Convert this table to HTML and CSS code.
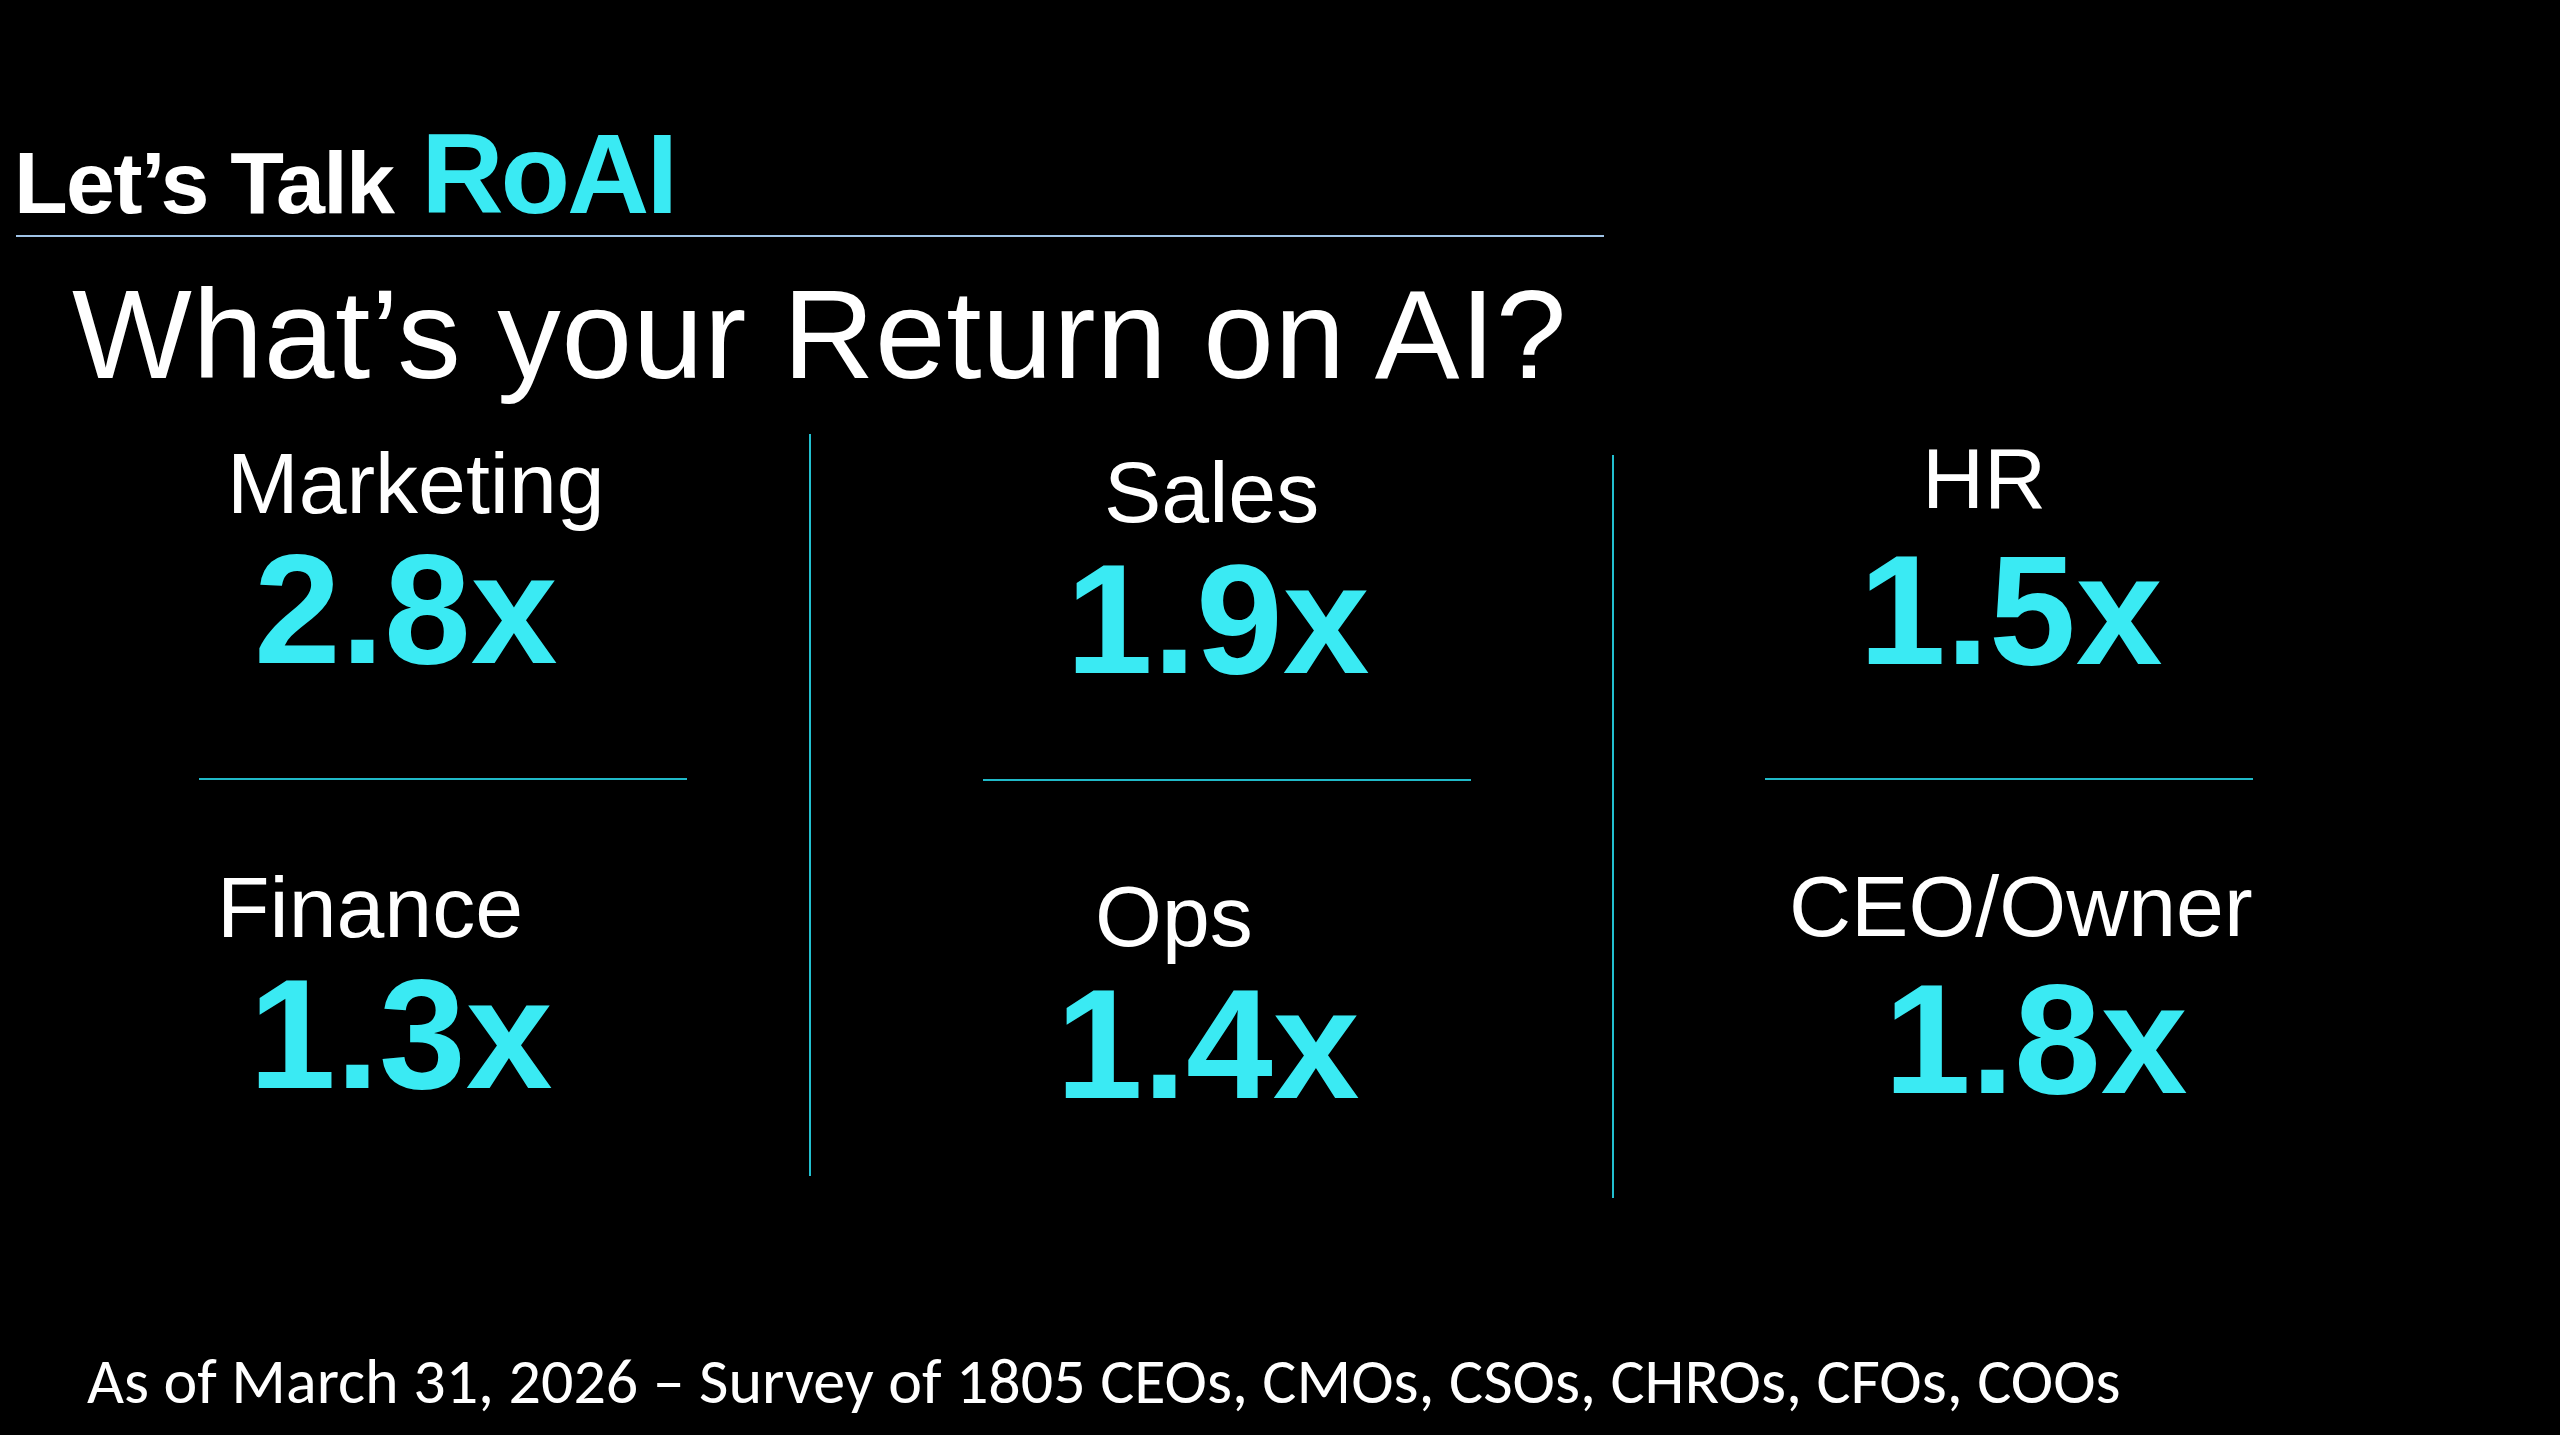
FILE: index.html
```html
<!DOCTYPE html>
<html lang="en">
<head>
<meta charset="utf-8">
<title>Let’s Talk RoAI</title>
<link rel="stylesheet" href="styles.css">
</head>
<body>
<main class="slide">
  <header class="header">
    <span class="header-lead">Let’s Talk</span>
    <span class="header-brand">RoAI</span>
  </header>
  <div class="rule"></div>
  <h1 class="title">What’s your Return on AI?</h1>

  <section class="stats">
    <div class="col col-1">
      <div class="label m-marketing">Marketing</div>
      <div class="value v-marketing">2.8x</div>
      <div class="divider d-1"></div>
      <div class="label m-finance">Finance</div>
      <div class="value v-finance">1.3x</div>
    </div>
    <div class="vline vline-1"></div>
    <div class="col col-2">
      <div class="label m-sales">Sales</div>
      <div class="value v-sales">1.9x</div>
      <div class="divider d-2"></div>
      <div class="label m-ops">Ops</div>
      <div class="value v-ops">1.4x</div>
    </div>
    <div class="vline vline-2"></div>
    <div class="col col-3">
      <div class="label m-hr">HR</div>
      <div class="value v-hr">1.5x</div>
      <div class="divider d-3"></div>
      <div class="label m-ceo">CEO/Owner</div>
      <div class="value v-ceo">1.8x</div>
    </div>
  </section>

  <footer class="footnote">As of March 31, 2026 – Survey of 1805 CEOs, CMOs, CSOs, CHROs, CFOs, COOs</footer>
</main>
</body>
</html>
```

FILE: styles.css
```css
html, body {
  margin: 0;
  padding: 0;
  background: #000;
}

body {
  width: 2560px;
  height: 1435px;
  overflow: hidden;
  font-family: "Liberation Sans", Arial, Helvetica, sans-serif;
  color: #fff;
}

.slide {
  display: flex;
  flex-direction: column;
  padding-top: 117px;
}

/* Header */
.header {
  display: flex;
  align-items: baseline;
  margin-left: 14px;
  font-weight: 700;
  line-height: 1;
}

.header-lead {
  font-size: 88px;
  letter-spacing: -1.7px;
  color: #fff;
  margin-right: 28px;
}

.header-brand {
  font-size: 114px;
  letter-spacing: -3px;
  color: #3aeaf3;
}

.rule {
  margin-top: 4px;
  margin-left: 16px;
  width: 1588px;
  height: 2px;
  background: #9fc3e6;
}

.title {
  margin: 34px 0 0 72px;
  font-size: 127px;
  font-weight: 400;
  line-height: 1;
  letter-spacing: 0.6px;
  color: #fff;
}

/* Stats grid */
.stats {
  display: flex;
  align-items: flex-start;
  margin-top: 36px;
}

.col {
  display: flex;
  flex-direction: column;
  align-items: flex-start;
}

.col-1 { width: 809px; }
.col-2 { width: 801px; }
.col-3 { flex: 1; }

.vline {
  width: 2px;
  background: #22bfcf;
  flex: none;
}

.vline-1 { height: 742px; }
.vline-2 { margin-top: 21px; height: 743px; }

.label {
  font-size: 86px;
  line-height: 1;
  color: #fff;
  white-space: nowrap;
}

.value {
  font-size: 156px;
  font-weight: 700;
  line-height: 1;
  color: #3aeaf3;
  white-space: nowrap;
}

.divider {
  width: 488px;
  height: 2px;
  background: #20b9c8;
}

/* column 1 */
.m-marketing { margin: 6px 0 0 227px; }
.v-marketing { margin: 5px 0 0 254px; }
.d-1 { margin: 91px 0 0 199px; }
.m-finance { margin: 84px 0 0 217px; }
.v-finance { margin: 6px 0 0 249px; }

/* column 2 */
.m-sales { margin: 15px 0 0 293px; }
.v-sales { margin: 6px 0 0 255px; }
.d-2 { margin: 82px 0 0 172px; }
.m-ops { margin: 92px 0 0 284px; }
.v-ops { margin: 7px 0 0 245px; }

/* column 3 */
.m-hr { margin: 1px 0 0 308px; }
.v-hr { margin: 11px 0 0 245px; }
.d-3 { margin: 90px 0 0 151px; }
.m-ceo { margin: 83px 0 0 175px; }
.v-ceo { margin: 12px 0 0 270px; }

/* Footnote */
.footnote {
  margin: 151px 0 0 87px;
  font-family: Carlito, Calibri, "Liberation Sans Narrow", "Liberation Sans", sans-serif;
  font-size: 64px;
  line-height: 1;
  color: #fff;
  white-space: nowrap;
}
```
